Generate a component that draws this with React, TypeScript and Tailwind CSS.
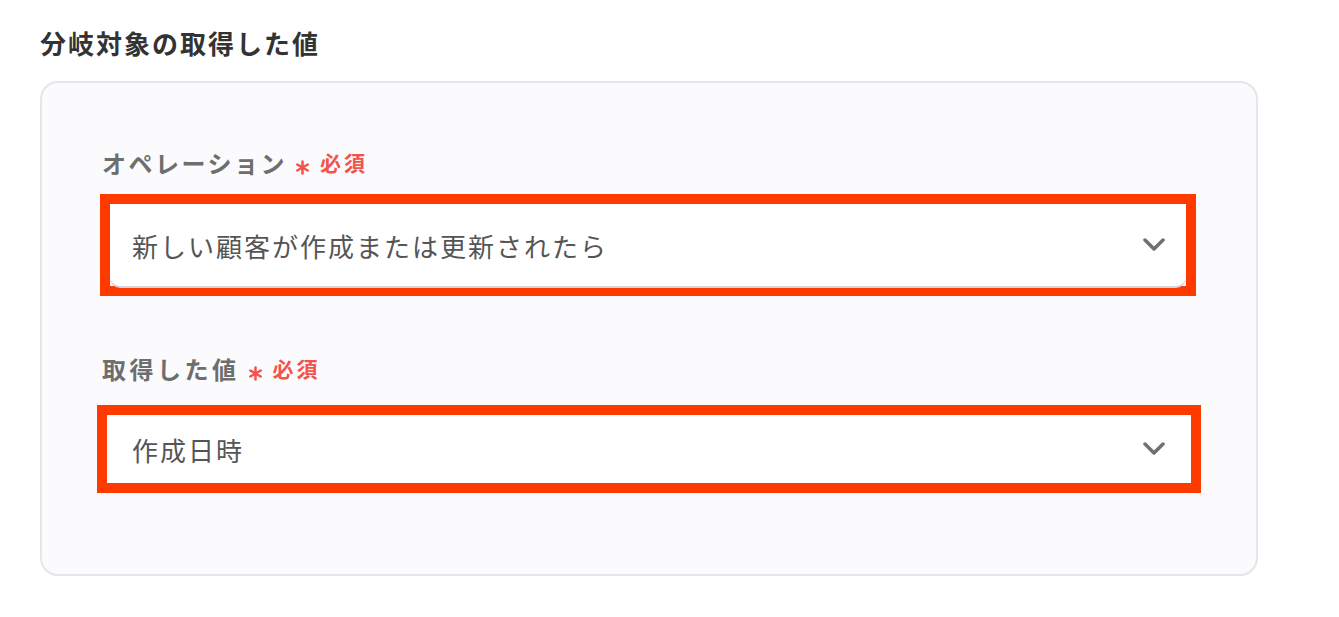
const font = { fontFamily: '"Noto Sans CJK JP", "Noto Sans", sans-serif' };

const Chevron = () => (
  <svg width="22" height="14" viewBox="0 0 22 14" fill="none" className="shrink-0">
    <polyline points="2,2 11,11 20,2" stroke="#707070" strokeWidth="3.5" strokeLinecap="round" strokeLinejoin="round" />
  </svg>
);

const Required = () => (
  <span className="ml-[9px] inline-flex items-center text-[#f4534b]">
    <svg width="13" height="15" viewBox="0 0 13 15" className="translate-y-[4px]">
      <g stroke="#f4534b" strokeWidth="2.5" strokeLinecap="round">
        <line x1="6.5" y1="1.5" x2="6.5" y2="13.5" />
        <line x1="1.3" y1="4.5" x2="11.7" y2="10.5" />
        <line x1="1.3" y1="10.5" x2="11.7" y2="4.5" />
      </g>
    </svg>
    <span className="ml-[11px] text-[21px] font-bold tracking-[3px]">必須</span>
  </span>
);

const App = () => {
  return (
    <div className="min-h-screen bg-white pl-10 pt-[25px]" style={font}>
      <h2 className="text-[26px] font-bold leading-[36px] tracking-[2px] text-[#333333]">
        分岐対象の取得した値
      </h2>

      <div className="mt-5 h-[495px] w-[1218px] rounded-[18px] border-2 border-[#e6e5ea] bg-[#fbfafd] px-[60px] pt-[64px]">
        {/* オペレーション */}
        <div className="flex h-8 items-center">
          <span className="text-[24px] font-bold tracking-[2.5px] text-[#6e6e6e]">オペレーション</span>
          <Required />
        </div>
        <div className="-ml-[2px] mt-[15px] w-[1096px] border-[10px] border-[#ff3a00]">
          <div className="flex h-[82px] items-center justify-between rounded-b-[10px] bg-white pl-[22px] pr-[21px] shadow-[0_2px_0_#d4d6de]">
            <span className="text-[26px] tracking-[2px] text-[#555555]">
              新しい顧客が作成または更新されたら
            </span>
            <Chevron />
          </div>
        </div>

        {/* 取得した値 */}
        <div className="mt-[57px] flex h-8 items-center">
          <span className="text-[24px] font-bold tracking-[3.5px] text-[#6e6e6e]">取得した値</span>
          <Required />
        </div>
        <div className="-ml-[5px] mt-[20px] w-[1104px] border-[10px] border-[#ff3a00]">
          <div className="flex h-[68px] items-center justify-between bg-white pl-[25px] pr-[26px]">
            <span className="text-[26px] tracking-[2px] text-[#555555]">作成日時</span>
            <Chevron />
          </div>
        </div>
      </div>
    </div>
  );
};

export default App;
